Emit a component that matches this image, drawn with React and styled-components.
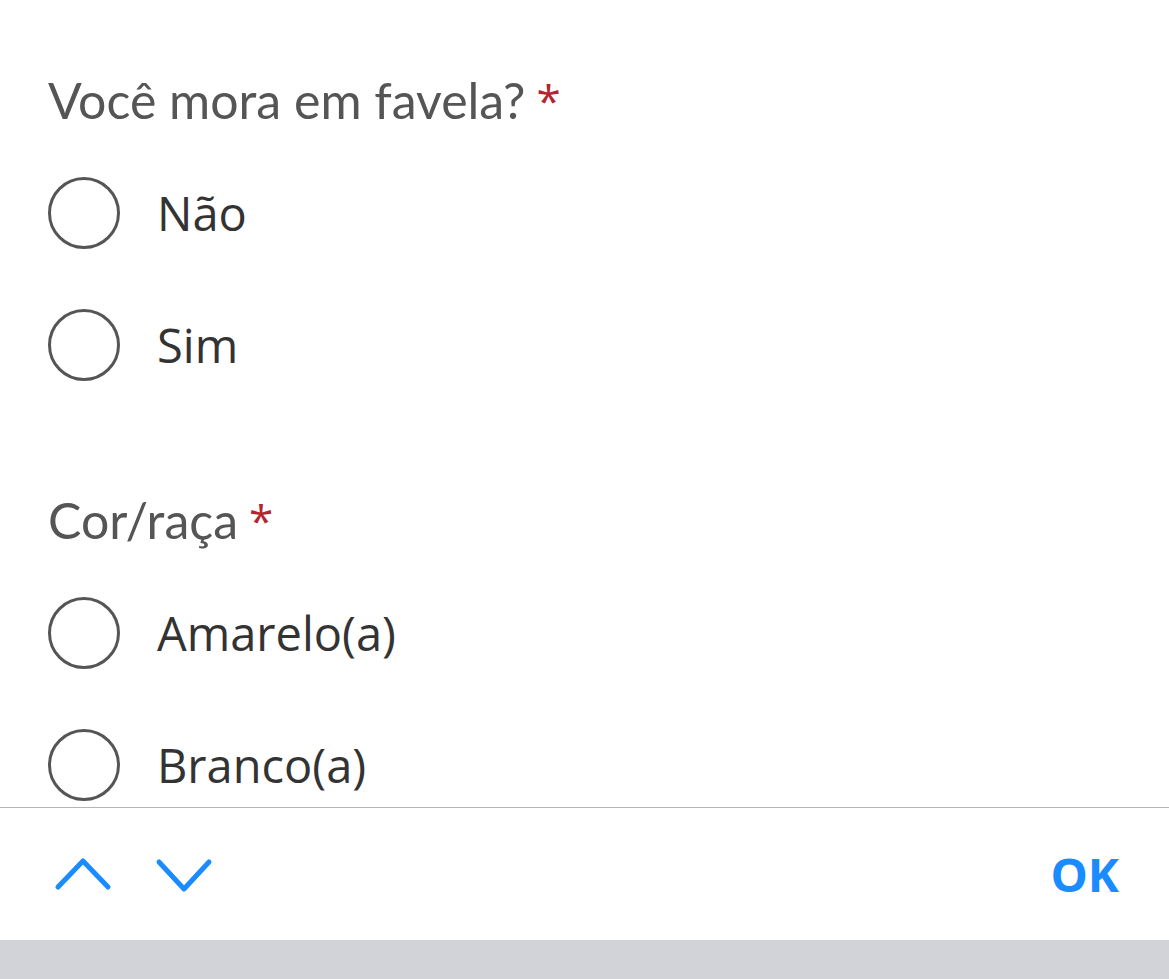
import React from "react";
import styled, { createGlobalStyle } from "styled-components";

const Global = createGlobalStyle`
  html, body { margin: 0; padding: 0; background: #fff; }
  body { font-family: "Open Sans", "Liberation Sans", sans-serif; }
  * { box-sizing: border-box; }
`;

const Page = styled.div`
  width: 1169px;
  height: 979px;
  display: flex;
  flex-direction: column;
  background: #fff;
  overflow: hidden;
`;

const Form = styled.div`
  height: 807px;
  overflow: hidden;
  padding: 70px 0 0 48px;
  display: flex;
  flex-direction: column;
`;

const Section = styled.div`
  display: flex;
  flex-direction: column;
  margin-bottom: 79px;
`;

const Label = styled.div`
  height: 60px;
  line-height: 60px;
  font-family: Lato, "Open Sans", sans-serif;
  font-size: 50px;
  color: #555;
  margin-bottom: 17px;
  white-space: nowrap;
`;

const Required = styled.span`
  color: #b3262f;
  margin-left: 11px;
  font-family: "Open Sans", sans-serif;
  font-size: 44px;
  vertical-align: 2px;
`;

const Option = styled.label`
  height: 132px;
  display: flex;
  align-items: center;
  gap: 37px;
  cursor: pointer;
`;

const Radio = styled.span`
  width: 72px;
  height: 72px;
  border-radius: 50%;
  border: 3px solid #555;
  flex-shrink: 0;
`;

const OptionText = styled.span`
  font-family: "Open Sans", sans-serif;
  font-size: 47px;
  color: #333;
  white-space: nowrap;
`;

const Toolbar = styled.div`
  height: 133px;
  border-top: 1px solid #b5b5b5;
  display: flex;
  align-items: center;
  padding: 0 50px 0 53px;
  background: #fff;
`;

const NavGroup = styled.div`
  display: flex;
  align-items: center;
  gap: 41px;
`;

const NavButton = styled.button`
  border: 0;
  background: none;
  padding: 0;
  width: 60px;
  height: 40px;
  display: flex;
  color: #1a8cff;
`;

const Done = styled.button`
  margin-left: auto;
  border: 0;
  background: none;
  padding: 0;
  font-family: "Open Sans", "Liberation Sans", sans-serif;
  font-weight: 700;
  font-size: 47px;
  color: #1a8cff;
`;

const Keyboard = styled.div`
  flex: 1;
  background: #d1d3d9;
`;

const Chevron = ({ up }) => (
  <svg width="60" height="40" viewBox="0 0 60 40" fill="none">
    <path
      d={up ? "M5 33 L30 7 L55 33" : "M5 8 L30 35 L55 8"}
      stroke="currentColor"
      strokeWidth="5"
      strokeLinecap="round"
      strokeLinejoin="round"
    />
  </svg>
);

const sections = [
  { label: "Você mora em favela?", options: ["Não", "Sim"] },
  { label: "Cor/raça", options: ["Amarelo(a)", "Branco(a)"] },
];

export default function App() {
  return (
    <Page>
      <Global />
      <Form>
        {sections.map((s) => (
          <Section key={s.label}>
            <Label>
              {s.label}
              <Required>*</Required>
            </Label>
            {s.options.map((o) => (
              <Option key={o}>
                <Radio />
                <OptionText>{o}</OptionText>
              </Option>
            ))}
          </Section>
        ))}
      </Form>
      <Toolbar>
        <NavGroup>
          <NavButton aria-label="Anterior">
            <Chevron up />
          </NavButton>
          <NavButton aria-label="Próximo">
            <Chevron />
          </NavButton>
        </NavGroup>
        <Done>OK</Done>
      </Toolbar>
      <Keyboard />
    </Page>
  );
}
